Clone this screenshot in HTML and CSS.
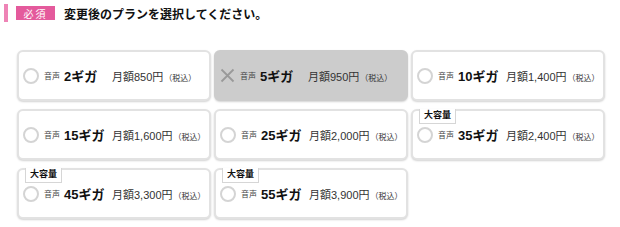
FILE: index.html
```html
<!DOCTYPE html>
<html lang="ja">
<head>
    <meta charset="UTF-8">
    <title>プラン選択</title>
    <link rel="stylesheet" href="styles.css">
</head>
<body>
    <div class="heading">
        <span class="heading-bar"></span>
        <span class="required">必須</span>
        <h2 class="heading-text">変更後のプランを選択してください。</h2>
    </div>

    <div class="plans">
        <label class="plan">
            <span class="radio"></span>
            <span class="voice">音声</span>
            <span class="size">2ギガ</span>
            <span class="price">月額850円<small>（税込）</small></span>
        </label>
        <div class="plan plan-current">
            <svg class="cross" width="15" height="15" viewBox="0 0 15 15">
                <path d="M1.5 1.5 L13.5 13.5 M13.5 1.5 L1.5 13.5" stroke="#999" stroke-width="1.8" fill="none"/>
            </svg>
            <span class="voice">音声</span>
            <span class="size">5ギガ</span>
            <span class="price">月額950円<small>（税込）</small></span>
        </div>
        <label class="plan">
            <span class="radio"></span>
            <span class="voice">音声</span>
            <span class="size">10ギガ</span>
            <span class="price">月額1,400円<small>（税込）</small></span>
        </label>

        <label class="plan">
            <span class="radio"></span>
            <span class="voice">音声</span>
            <span class="size">15ギガ</span>
            <span class="price">月額1,600円<small>（税込）</small></span>
        </label>
        <label class="plan">
            <span class="radio"></span>
            <span class="voice">音声</span>
            <span class="size">25ギガ</span>
            <span class="price">月額2,000円<small>（税込）</small></span>
        </label>
        <label class="plan">
            <span class="tag">大容量</span>
            <span class="radio"></span>
            <span class="voice">音声</span>
            <span class="size">35ギガ</span>
            <span class="price">月額2,400円<small>（税込）</small></span>
        </label>

        <label class="plan">
            <span class="tag">大容量</span>
            <span class="radio"></span>
            <span class="voice">音声</span>
            <span class="size">45ギガ</span>
            <span class="price">月額3,300円<small>（税込）</small></span>
        </label>
        <label class="plan">
            <span class="tag">大容量</span>
            <span class="radio"></span>
            <span class="voice">音声</span>
            <span class="size">55ギガ</span>
            <span class="price">月額3,900円<small>（税込）</small></span>
        </label>
    </div>
</body>
</html>
```

FILE: styles.css
```css
* {
    margin: 0;
    padding: 0;
    box-sizing: border-box;
    font-family: "Liberation Sans", "Noto Sans CJK JP", sans-serif;
}

body {
    background-color: #ffffff;
    color: #222;
    width: 620px;
    height: 227px;
    overflow: hidden;
}

.heading {
    display: flex;
    align-items: center;
    padding: 4px 0 0 4px;
    height: 22px;
}

.heading-bar {
    width: 4px;
    height: 18px;
    background-color: #ee84b6;
}

.required {
    display: flex;
    align-items: center;
    justify-content: center;
    width: 39px;
    height: 14px;
    margin-left: 8px;
    background-color: #e45a9c;
    color: #fff;
    font-size: 10px;
    letter-spacing: 2px;
}

.heading-text {
    margin-left: 9px;
    font-size: 12px;
    font-weight: bold;
    color: #111;
}

.plans {
    display: grid;
    grid-template-columns: repeat(3, 194px);
    grid-auto-rows: 51px;
    column-gap: 3px;
    row-gap: 8px;
    padding: 28px 0 0 17px;
}

.plan {
    position: relative;
    display: flex;
    align-items: center;
    padding-left: 4px;
    border: 2px solid #e2e2e2;
    border-radius: 6px;
    box-shadow: 0 1px 2px rgba(0, 0, 0, 0.18);
    background-color: #fff;
    cursor: pointer;
}

.plan-current {
    background-color: #cccccc;
    border-color: #cccccc;
    cursor: default;
}

.radio {
    width: 16px;
    height: 16px;
    border: 2px solid #d4d4d4;
    border-radius: 50%;
    background-color: #fff;
    flex-shrink: 0;
}

.cross {
    flex-shrink: 0;
}

.voice {
    margin-left: 5px;
    font-size: 8px;
    color: #444;
    width: 20px;
}

.size {
    font-size: 13px;
    font-weight: bold;
    color: #111;
    min-width: 48px;
}

.price {
    font-size: 11px;
    color: #333;
    white-space: nowrap;
}

.price small {
    font-size: 8px;
    margin-left: 1px;
}

.tag {
    position: absolute;
    top: -2px;
    left: 6px;
    padding: 1px 4px 2px;
    background-color: #fff;
    border: 1px solid #d6d6d6;
    border-top: none;
    font-size: 9px;
    font-weight: bold;
    color: #111;
    line-height: 11px;
}
```
